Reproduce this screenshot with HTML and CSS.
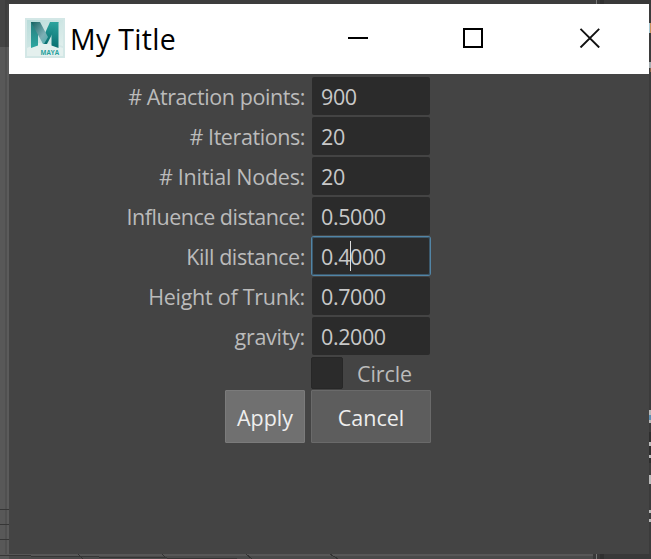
FILE: index.html
```
<!DOCTYPE html>
<html lang="en">
<head>
<meta charset="utf-8">
<title>My Title</title>
<link rel="stylesheet" href="styles.css">
</head>
<body>
<svg class="backdrop" width="651" height="559" viewBox="0 0 651 559" shape-rendering="crispEdges" aria-hidden="true">
  <path fill="#585858" d="M0 47h9v512H0z"/>
  <path fill="#505050" d="M5 47h2v507H5z"/>
  <path fill="#5b5b5b" d="M7 47h2v507H7z"/>
  <path fill="#3d3d3d" d="M5 0h2v47H5zM7 0h590v4H7z"/>
  <path fill="#4a4a4a" d="M9 554h584v5H9z"/>
  <path fill="#575757" d="M7 554h586v2H7z"/>
  <path fill="#393939" d="M593 554h58v5h-58zM597 0h54v4h-54z"/>
  <path fill="#303030" d="M600 554h4v5h-4zM600 0h4v4h-4z"/>
  <path fill="#777" d="M596 554h1v5h-1zM596 0h1v4h-1z"/>
  <path fill="#363636" d="M0 509h9v1H0zM0 524h9v1H0zM0 539h9v1H0zM0 555h31v1H0zM31 556h68v1H31zM99 557h68v1H99zM167 558h70v1h-70z"/>
  <path fill="none" stroke="#333" d="M78 554l5 5M162 554l3 3M246 554l6 5M330 554l8 5"/>
  <path fill="#3b3b3b" d="M649 4h2v550h-2z"/>
  <path fill="#2e2e2e" d="M649 432h2v10h-2zM649 446h2v17h-2z"/>
  <path fill="#bababa" d="M649 410h2v5h-2zM649 420h2v3h-2zM649 442h2v4h-2zM649 455h2v3h-2zM649 475h2v9h-2zM649 510h2v3h-2zM649 519h2v3h-2z"/>
  <path fill="#5b8db0" d="M649 415h2v5h-2z"/>
  <path fill="#a9cbd5" d="M649 23h1v10h-1z"/>
  <path fill="#c9935d" d="M650 23h1v10h-1z"/>
  <path fill="#a5adb0" d="M649 62h2v6h-2z"/>
  <path fill="#8b6549" d="M650 68h1v4h-1z"/>
</svg>
<main class="window">
  <header class="titlebar">
    <svg class="logo" width="40" height="40" viewBox="0 0 40 40" aria-hidden="true">
      <defs>
        <linearGradient id="tile" x2="1" y2="1"><stop stop-color="#b9dcda"/><stop offset="1" stop-color="#e1efed"/></linearGradient>
        <linearGradient id="left" x2="0" y2="1"><stop stop-color="#257d7d"/><stop offset="1" stop-color="#2da7a1"/></linearGradient>
        <linearGradient id="fold" x2="1" y2="1"><stop stop-color="#12605f"/><stop offset=".65" stop-color="#7dafb5"/><stop offset="1" stop-color="#4aaead"/></linearGradient>
        <linearGradient id="right" x2="0" y2="1"><stop stop-color="#2ba49e"/><stop offset="1" stop-color="#096f70"/></linearGradient>
      </defs>
      <path fill="#d3e7e6" d="M0 0h40v40H0z"/>
      <path fill="url(#tile)" d="M2 2h36v26L26 25 2 30z"/>
      <path fill="#e4f0ee" d="M2 30l12-5 12 1 12 4v8H2z"/>
      <path fill="url(#left)" d="M6 4h7v23.500l-7 2.500z"/>
      <path fill="url(#right)" d="M26.500 4h7v26l-7-2.500z"/>
      <path fill="url(#right)" d="M25 4h8.500L22 26h-3.500l-1.500-4z"/>
      <path fill="url(#fold)" d="M6 4h9l8 15-4 7h-1z"/>
    <text class="logo-text" x="15.500" y="37.200" textLength="18.500" lengthAdjust="spacingAndGlyphs">MAYA</text>
    </svg>
    <h1 class="title">My Title</h1>
    <svg class="controls" width="254" height="20" viewBox="0 0 254 20" aria-hidden="true">
      <path fill="#000" d="M0 9h20v2H0z"/>
      <path fill="none" stroke="#000" stroke-width="2" d="M116 1h18v18h-18z"/>
      <path fill="none" stroke="#111" stroke-width="1.900" d="M232.500 .8l18.700 18.700M251.200 .8l-18.700 18.700"/>
    </svg>
  </header>
  <form class="form">
    <div class="row"><span class="label snug">#&nbsp;Atraction points:</span><span class="field">900</span></div>
    <div class="row"><span class="label snug"># Iterations:</span><span class="field">20</span></div>
    <div class="row"><span class="label"># Initial Nodes:</span><span class="field">20</span></div>
    <div class="row"><span class="label tight">Influence distance:</span><span class="field">0.5000</span></div>
    <div class="row"><span class="label snug">Kill distance:</span><span class="field focused">0.4000<i class="caret"></i></span></div>
    <div class="row"><span class="label">Height of Trunk:</span><span class="field">0.7000</span></div>
    <div class="row"><span class="label">gravity:</span><span class="field">0.2000</span></div>
    <div class="check"><span class="box"></span><span class="check-label">Circle</span></div>
    <div class="actions"><span class="button apply">Apply</span><span class="button cancel">Cancel</span></div>
  </form>
</main>
</body>
</html>
```

FILE: styles.css
```
* { box-sizing: border-box; }
body {
  margin: 0;
  width: 651px;
  height: 559px;
  overflow: hidden;
  background: #444;
  font-family: "Open Sans", "Noto Sans", sans-serif;
  font-size: 21.5px;
  line-height: 30px;
}
.backdrop { position: absolute; left: 0; top: 0; }
.window {
  position: relative;
  width: 640px;
  height: 550px;
  margin: 4px 0 0 9px;
  background: #444;
}
.titlebar {
  display: flex;
  align-items: center;
  height: 70px;
  padding-left: 16px;
  background: #fff;
}
.logo { flex: none; margin-top: -2px; }
.logo-text { font: bold 7px "Open Sans", sans-serif; fill: #25a19d; }
.title {
  flex: none;
  width: 283px;
  margin: 0;
  padding-left: 5px;
  font-size: 28.5px;
  font-weight: 400;
  letter-spacing: .3px;
  color: #000;
  white-space: nowrap;
}
.controls { flex: none; margin-top: -2px; }
.form { padding-top: 3px; }
.row { display: flex; height: 38px; margin-bottom: 2px; }
.label {
  width: 296px;
  margin-right: 7px;
  padding-top: 5px;
  color: #bbb;
  letter-spacing: -.27px;
  text-align: right;
  white-space: nowrap;
}
.snug { letter-spacing: -.42px; }
.tight { letter-spacing: -.5px; }
.field {
  position: relative;
  width: 118px;
  height: 38px;
  padding: 5px 0 0 9px;
  border-radius: 2px;
  background: #2b2b2b;
  color: #c8c8c8;
  letter-spacing: -.4px;
}
.focused { box-shadow: 0 0 0 1px #5285a6, inset 0 0 0 1px #3c586b; }
.caret { position: absolute; left: 38px; top: 4px; width: 1px; height: 30px; background: #ddd; }
.check { display: flex; align-items: center; height: 32px; margin-left: 302px; color: #bbb; }
.check-label { padding-top: 2px; letter-spacing: -.1px; }
.box { width: 32px; height: 32px; margin-right: 14px; border: 1px solid #272727; border-radius: 2px; background: #2b2b2b; }
.actions { display: flex; gap: 6px; margin: 1px 0 0 216px; }
.button {
  height: 53px;
  border: 1px solid #6a6a6a;
  border-radius: 1px;
  color: #eee;
  line-height: 54px;
  text-align: center;
}
.apply { width: 80px; background: #707070; border-color: #7b7b7b; }
.cancel { width: 120px; background: #5d5d5d; }
```
